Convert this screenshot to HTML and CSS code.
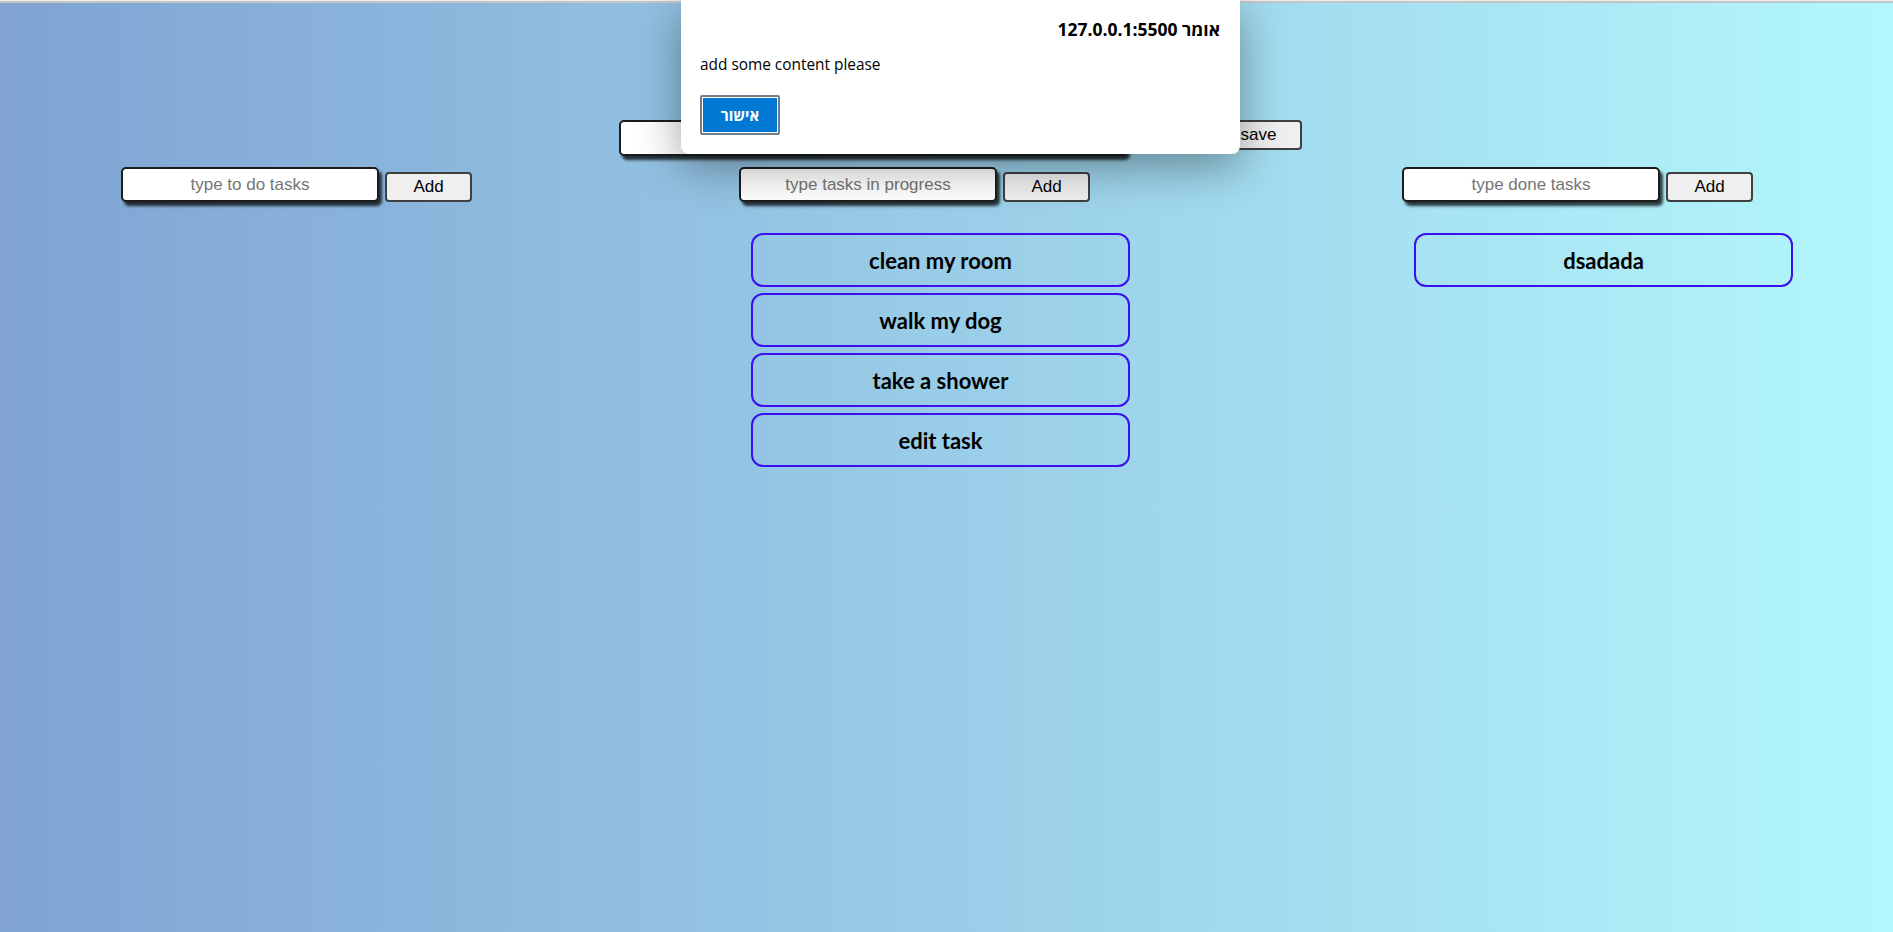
FILE: index.html
```html
<!DOCTYPE html>
<html lang="en">
<head>
<meta charset="utf-8">
<title>Tasks</title>
<link rel="stylesheet" href="styles.css">
</head>
<body>
<div class="topline"></div>

<div class="alert" role="alertdialog">
  <div class="alert-title">127.0.0.1:5500 אומר</div>
  <div class="alert-msg">add some content please</div>
  <button class="alert-ok">אישור</button>
</div>

<header class="top-row">
  <input class="field field-wide" type="text">
  <button class="btn btn-save">save</button>
</header>

<main class="board">
  <section class="col">
    <div class="add-row">
      <input class="field" type="text" placeholder="type to do tasks">
      <button class="btn">Add</button>
    </div>
    <div class="cards"></div>
  </section>

  <section class="col">
    <div class="add-row">
      <input class="field" type="text" placeholder="type tasks in progress">
      <button class="btn">Add</button>
    </div>
    <div class="cards">
      <div class="card">clean my room</div>
      <div class="card">walk my dog</div>
      <div class="card">take a shower</div>
      <div class="card">edit task</div>
    </div>
  </section>

  <section class="col">
    <div class="add-row">
      <input class="field" type="text" placeholder="type done tasks">
      <button class="btn">Add</button>
    </div>
    <div class="cards">
      <div class="card">dsadada</div>
    </div>
  </section>
</main>
</body>
</html>
```

FILE: styles.css
```css
html, body {
  margin: 0;
  padding: 0;
}

body {
  min-height: 932px;
  background: linear-gradient(to right, #80a3d3, #b3f7fc);
  font-family: "Liberation Sans", Arial, sans-serif;
  position: relative;
  overflow: hidden;
}

.topline {
  height: 1px;
  background: #eeeeee;
  border-bottom: 2px solid #c4c4c4;
}

/* ---------- top row ---------- */
.top-row {
  display: flex;
  align-items: flex-start;
  gap: 88px;
  padding-left: 619px;
  margin-top: 117px;
}

.field {
  box-sizing: border-box;
  width: 258px;
  height: 35px;
  border: 2px solid #1c1c1c;
  border-radius: 5px;
  background: #ffffff;
  box-shadow: 3px 4px 3px rgba(0, 0, 0, 0.75);
  font-family: "Liberation Sans", Arial, sans-serif;
  font-size: 17px;
  text-align: center;
  color: #000;
  padding: 0 6px;
}

.field::placeholder {
  color: #757575;
}

.field-wide {
  width: 508px;
  height: 36px;
}

.btn {
  box-sizing: border-box;
  width: 87px;
  height: 30px;
  border: 2px solid #3f3f3f;
  border-radius: 4px;
  background: #efefef;
  font-family: "Liberation Sans", Arial, sans-serif;
  font-size: 17px;
  color: #000;
  padding: 0;
}

/* ---------- board ---------- */
.board {
  display: grid;
  grid-template-columns: 618px 663px 390px;
  padding-left: 121px;
  margin-top: 11px;
}

.add-row {
  display: flex;
  align-items: flex-end;
  gap: 6px;
}

.cards {
  display: flex;
  flex-direction: column;
  gap: 6px;
  margin-top: 31px;
  margin-left: 12px;
}

.card {
  box-sizing: border-box;
  width: 379px;
  height: 54px;
  border: 2px solid #3a0ff0;
  border-radius: 12px;
  display: flex;
  align-items: center;
  justify-content: center;
  font-family: Lato, "Open Sans", sans-serif;
  font-weight: 700;
  font-size: 22px;
  color: #000;
}

/* ---------- alert dialog ---------- */
.alert {
  position: absolute;
  top: 0;
  left: 681px;
  width: 559px;
  height: 154px;
  box-sizing: border-box;
  padding: 17px 20px 0 19px;
  background: #ffffff;
  border-radius: 0 0 8px 8px;
  box-shadow: 0 12px 45px rgba(0, 0, 0, 0.38);
  z-index: 10;
  font-family: "Open Sans", "Noto Sans", "DejaVu Sans", sans-serif;
  color: #000;
}

.alert-title {
  direction: ltr;
  text-align: right;
  font-size: 17.5px;
  line-height: 24px;
  font-weight: 700;
}

.alert-msg {
  margin-top: 14px;
  font-size: 15.4px;
  line-height: 20px;
}

.alert-ok {
  display: block;
  margin-top: 20px;
  box-sizing: border-box;
  width: 80px;
  height: 40px;
  border: 2px solid #737f8b;
  border-radius: 2px;
  box-shadow: inset 0 0 0 1px #ffffff;
  background: #0078d4;
  color: #ffffff;
  font-family: "Open Sans", "Noto Sans", "DejaVu Sans", sans-serif;
  font-size: 15px;
  font-weight: 700;
  padding: 0;
}
```
